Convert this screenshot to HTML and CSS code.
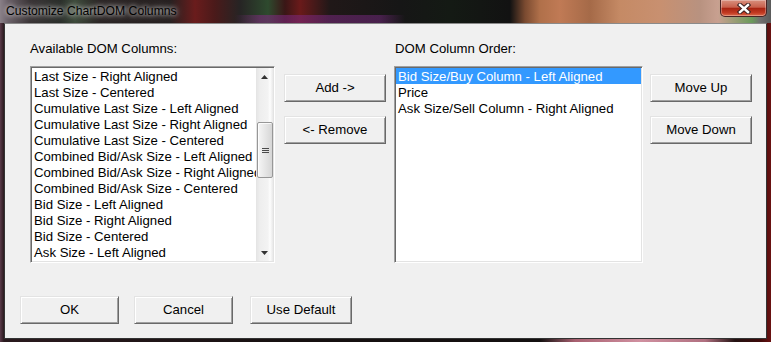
FILE: index.html
```html
<!DOCTYPE html>
<html lang="en">
<head>
    <meta charset="UTF-8">
    <title>Customize ChartDOM Columns</title>
    <link rel="stylesheet" href="styles.css">
</head>
<body>
    <div class="window">
        <div class="titlebar">
            <span class="title">Customize ChartDOM Columns</span>
            <button class="close">
                <svg width="14" height="11" viewBox="0 0 14 11">
                    <path d="M3 2 L11 9 M11 2 L3 9" stroke="#3a2020" stroke-width="4.4" stroke-linecap="square"/>
                    <path d="M3 2 L11 9 M11 2 L3 9" stroke="#fff" stroke-width="2.4" stroke-linecap="square"/>
                </svg>
            </button>
        </div>
        <div class="client">
            <div class="main">
                <div class="panel panel_left">
                    <div class="label">Available DOM Columns:</div>
                    <div class="listbox">
                        <div class="items">
                            <div class="item">Last Size - Right Aligned</div>
                            <div class="item">Last Size - Centered</div>
                            <div class="item">Cumulative Last Size - Left Aligned</div>
                            <div class="item">Cumulative Last Size - Right Aligned</div>
                            <div class="item">Cumulative Last Size - Centered</div>
                            <div class="item">Combined Bid/Ask Size - Left Aligned</div>
                            <div class="item">Combined Bid/Ask Size - Right Aligned</div>
                            <div class="item">Combined Bid/Ask Size - Centered</div>
                            <div class="item">Bid Size - Left Aligned</div>
                            <div class="item">Bid Size - Right Aligned</div>
                            <div class="item">Bid Size - Centered</div>
                            <div class="item">Ask Size - Left Aligned</div>
                        </div>
                        <div class="scrollbar">
                            <div class="arrow">
                                <svg width="7" height="4" viewBox="0 0 7 4"><path d="M3.5 0 L7 4 L0 4 Z" fill="#333"/></svg>
                            </div>
                            <div class="track">
                                <div class="thumb">
                                    <svg width="7" height="7" viewBox="0 0 7 7">
                                        <path d="M0 1.5 H7 M0 3.5 H7 M0 5.5 H7" stroke="#4a4a4a" stroke-width="1"/>
                                    </svg>
                                </div>
                            </div>
                            <div class="arrow">
                                <svg width="7" height="4" viewBox="0 0 7 4"><path d="M0 0 L7 0 L3.5 4 Z" fill="#333"/></svg>
                            </div>
                        </div>
                    </div>
                </div>
                <div class="side side_add">
                    <button class="btn">Add -&gt;</button>
                    <button class="btn">&lt;- Remove</button>
                </div>
                <div class="panel panel_right">
                    <div class="label">DOM Column Order:</div>
                    <div class="listbox">
                        <div class="items">
                            <div class="item selected">Bid Size/Buy Column - Left Aligned</div>
                            <div class="item">Price</div>
                            <div class="item">Ask Size/Sell Column - Right Aligned</div>
                        </div>
                    </div>
                </div>
                <div class="side side_move">
                    <button class="btn">Move Up</button>
                    <button class="btn">Move Down</button>
                </div>
            </div>
            <div class="footer">
                <button class="btn btn_ok">OK</button>
                <button class="btn btn_cancel">Cancel</button>
                <button class="btn btn_default">Use Default</button>
            </div>
        </div>
    </div>
</body>
</html>
```

FILE: styles.css
```css
*{
    box-sizing: border-box;
}
body{
    margin: 0;
    font-family: "Liberation Sans", Arial, sans-serif;
    font-size: 13.2px;
    color: #000;
}
.window{
    width: 771px;
    height: 342px;
    display: flex;
    flex-direction: column;
    background: linear-gradient(to right, #5a3a4a 0, #2a1a1e 4px, #161010 300px, #141010 540px, #a86070 575px, #d090a0 640px, #b07080 705px, #241212 735px, #3e0a0a 760px, #6a1212 771px);
}
.titlebar{
    height: 23px;
    display: flex;
    align-items: flex-start;
    background:
        linear-gradient(to right, transparent 235px, rgba(130,40,130,.55) 260px, rgba(110,40,120,.55) 380px, transparent 405px) 0 15px / 100% 8px no-repeat,
        linear-gradient(to right, #8a8088 0, #6a6068 8px, #3a3436 30px, #2a2e2a 60px, #3c4a3a 75px, #2a2424 100px, #262020 170px, #6a1c1c 195px, #4a1a1a 215px, #262424 240px, #2e4a2e 268px, #3a1616 285px, #6a1a1a 300px, #201818 330px, #161616 400px, #141a14 450px, #121212 510px, #7a4a30 525px, #b0704a 540px, #c07a55 560px, #a56a48 590px, #c58a65 620px, #c89070 660px, #b89280 700px, #c8a090 718px, #6a9a5a 752px, #707070 760px, #5a5a5a 771px);
}
.title{
    font-size: 12.2px;
    line-height: 23px;
    padding-left: 6px;
    color: #000;
    text-shadow: 0 0 4px rgba(255,255,255,.9), 0 0 8px rgba(255,255,255,.6);
}
.close{
    width: 47px;
    height: 17px;
    margin-left: auto;
    margin-right: 4px;
    padding: 0;
    border: 1px solid #4a2424;
    border-top: none;
    border-radius: 0 0 5px 5px;
    background: linear-gradient(#d8907e, #c8604c 45%, #a82412 52%, #c23a22 80%, #dc6a4a);
    box-shadow: inset 0 0 0 1px rgba(255,255,255,.3);
    display: flex;
    align-items: center;
    justify-content: center;
}
.client{
    margin: 0 4px;
    height: 316px;
    border: 1px solid #333;
    border-top-color: #8a8a8a;
    background: #f0f0f0;
    padding: 16px 0 14px 15px;
}
.main{
    display: flex;
    margin-left: 10px;
    height: 223px;
}
.panel_left{
    width: 245px;
}
.panel_right{
    width: 249px;
    margin-left: 8px;
}
.panel_right .label{
    padding-left: 1px;
}
.label{
    height: 16px;
    line-height: 17px;
    margin-bottom: 10px;
}
.listbox{
    height: 197px;
    background: #fff;
    border: 1px solid;
    border-color: #a0a0a0 #fff #fff #a0a0a0;
    box-shadow: inset 1px 1px #696969, inset -1px -1px #e3e3e3;
    padding: 1px;
    display: flex;
}
.items{
    flex: 1;
    overflow: hidden;
    white-space: nowrap;
}
.item{
    height: 16px;
    line-height: 17px;
    padding-left: 2px;
}
.item.selected{
    background: #3399ff;
    color: #fff;
}
.scrollbar{
    width: 17px;
    display: flex;
    flex-direction: column;
    background: linear-gradient(to right, #e4e4e4 0, #eeeeee 4px, #f3f3f3 12px, #fdfdfd 14px, #e8e8e8 17px);
}
.arrow{
    height: 17px;
    display: flex;
    align-items: center;
    justify-content: center;
}
.track{
    flex: 1;
}
.thumb{
    margin: 37px 0 0 1px;
    height: 56px;
    border: 1px solid #979797;
    border-radius: 2px;
    background: linear-gradient(to right, #f6f6f6, #e6e6e6 50%, #d6d6d6);
    box-shadow: inset 1px 1px rgba(255,255,255,.8);
    display: flex;
    align-items: center;
    justify-content: center;
}
.side{
    width: 102px;
    padding-top: 34px;
    display: flex;
    flex-direction: column;
    gap: 14px;
}
.side_add{
    margin-left: 9px;
}
.side_move{
    margin-left: 7px;
}
.btn{
    height: 28px;
    width: 102px;
    padding: 0 0 2px;
    font-family: "Liberation Sans", Arial, sans-serif;
    font-size: 13.2px;
    color: #000;
    background: #f0f0f0;
    border: 1px solid;
    border-color: #e3e3e3 #696969 #696969 #e3e3e3;
    box-shadow: inset 1px 1px #fff, inset -1px -1px #a0a0a0;
    outline: none;
}
.footer{
    display: flex;
    margin-top: 33px;
}
.btn_ok,
.btn_cancel{
    width: 99px;
}
.btn_cancel{
    margin-left: 15px;
}
.btn_default{
    margin-left: 17px;
}
```
